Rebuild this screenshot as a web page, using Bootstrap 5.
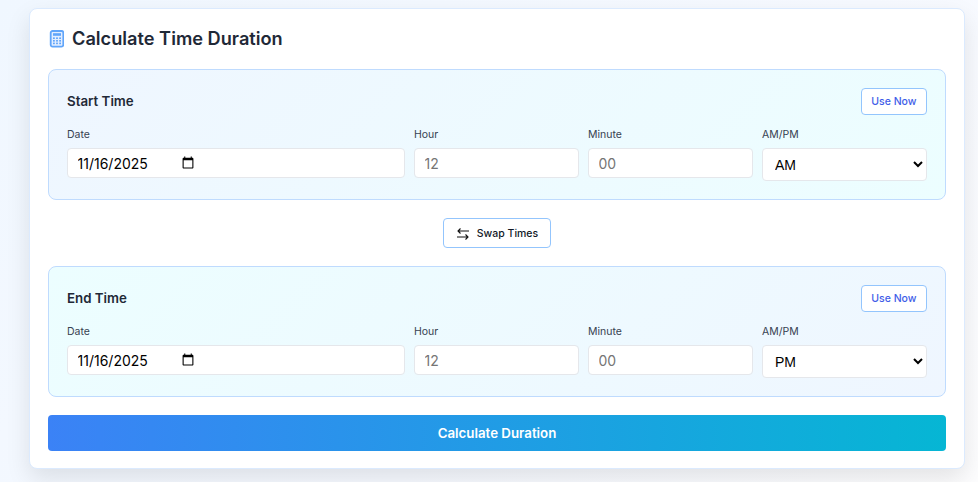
<!DOCTYPE html>
<html lang="en">
<head>
<meta charset="utf-8">
<title>Calculate Time Duration</title>
<link href="https://cdn.jsdelivr.net/npm/bootstrap@5.3.0/dist/css/bootstrap.min.css" rel="stylesheet">
<style>
html,body{height:482px;overflow:hidden}
body{font-family:Inter,sans-serif;background:linear-gradient(135deg,#f0f7ff 0%,#f6f9ff 60%,#fdfdfe 100%);color:#1f2937}
.page-wrap{padding:8px 13px 0 29px}
.calc-card{background:#fff;border:1px solid #dbeafe;border-radius:8px;box-shadow:0 10px 25px rgba(0,0,0,.1);padding:17px 18px;height:461px}
.calc-title{font-size:18.2px;font-weight:600;line-height:25px;margin:0 0 18px;height:25px;padding-bottom:0;color:#1f2937}
.time-panel{border:1px solid #bfdbfe;border-radius:8px;padding:18px;height:131px}
.panel-a{background:linear-gradient(135deg,#eff6ff,#ecfeff)}
.panel-b{background:linear-gradient(135deg,#ecfeff,#eff6ff)}
.panel-name{font-size:13.3px;font-weight:600;margin:0;color:#1f2937}
.panel-head{height:27px;margin-bottom:13px}
.use-btn{font-size:10.5px;font-weight:500;color:#3f5ee8;background:#fff;border:1px solid #93c5fd;border-radius:4px;padding:0 9.5px;height:27px;line-height:25px}
.use-btn:hover{background:#fff;color:#3f5ee8;border-color:#93c5fd}
.field-grid{display:grid;grid-template-columns:minmax(0,1fr) repeat(3,165px);gap:9px}
.field-label{font-size:10.5px;font-weight:400;color:#374151;line-height:13px;margin:0 0 7px;display:block}
.field-input{font-size:14px;height:30px;border:1px solid #e5e7eb;border-radius:4px;padding:0 9.5px;color:#000;box-shadow:none}
.field-input::placeholder{color:#757575}
.date-box{height:30px;border:1px solid #e5e7eb;border-radius:4px;background:#fff;padding:0 9.5px}
.date-input{font-family:Inter,sans-serif;font-size:14px;color:#000;border:0;outline:0;background:transparent;padding:0;height:28px;width:119px;display:block}
.field-select{font-size:14px;height:33px;border:1px solid #e5e7eb;border-radius:4px;padding:0 9.5px 0 8px;color:#000;font-family:"Liberation Sans",Arial,sans-serif;box-shadow:none;background-image:none;appearance:auto;background-color:#fff}
.swap-row{padding:18px 0}
.swap-btn{font-size:10.5px;font-weight:500;color:#111827;background:#fff;border:1px solid #93c5fd;border-radius:4px;height:30px;padding:1px 12px 0;gap:7px}
.swap-btn:hover{background:#fff;color:#111827;border-color:#93c5fd}
.calc-btn{display:block;width:100%;height:36px;margin-top:18px;border:0;border-radius:4px;color:#fff;font-size:13.3px;font-weight:600;padding-top:2px;background:linear-gradient(90deg,#3b82f6,#06b6d4)}
</style>
</head>
<body>
<div class="page-wrap">
  <div class="calc-card">
    <h1 class="calc-title d-flex align-items-center gap-2 mt-0">
      <svg width="16" height="18" viewBox="-1 0 16 18" aria-hidden="true">
        <rect x="1.7" y="1" width="12.6" height="15.6" rx="1.8" fill="#e3eeff" stroke="#60a5fa" stroke-width="1.8"/>
        <rect x="4" y="3.2" width="8" height="2.6" fill="#60a5fa"/>
        <g fill="#60a5fa"><rect x="4" y="7.4" width="1.8" height="1.6"/><rect x="7.1" y="7.4" width="1.8" height="1.6"/><rect x="10.2" y="7.4" width="1.8" height="1.6"/><rect x="4" y="10" width="1.8" height="1.6"/><rect x="7.1" y="10" width="1.8" height="1.6"/><rect x="10.2" y="10" width="1.8" height="1.6"/><rect x="4" y="12.6" width="1.8" height="1.6"/><rect x="7.1" y="12.6" width="1.8" height="1.6"/><rect x="10.2" y="12.6" width="1.8" height="1.6"/></g>
      </svg>
      Calculate Time Duration
    </h1>

    <section class="time-panel panel-a">
      <div class="panel-head d-flex justify-content-between align-items-center">
        <h2 class="panel-name">Start Time</h2>
        <button type="button" class="btn use-btn">Use Now</button>
      </div>
      <div class="field-grid">
        <div><label class="field-label">Date</label><div class="date-box"><input type="date" class="date-input" value="2025-11-16"></div></div>
        <div><label class="field-label">Hour</label><input type="text" class="form-control field-input" placeholder="12"></div>
        <div><label class="field-label">Minute</label><input type="text" class="form-control field-input" placeholder="00"></div>
        <div><label class="field-label">AM/PM</label><select class="form-select field-select"><option selected>AM</option><option>PM</option></select></div>
      </div>
    </section>

    <div class="swap-row d-flex justify-content-center">
      <button type="button" class="btn swap-btn d-inline-flex align-items-center">
        <svg width="14" height="14" viewBox="0 0 14 14" fill="none" stroke="#111" stroke-width="1.1" aria-hidden="true"><path d="M13 4H2M4.5 1.5 2 4l2.5 2.5M1 10h11M9.5 7.5 12 10l-2.5 2.5"/></svg>
        Swap Times
      </button>
    </div>

    <section class="time-panel panel-b">
      <div class="panel-head d-flex justify-content-between align-items-center">
        <h2 class="panel-name">End Time</h2>
        <button type="button" class="btn use-btn">Use Now</button>
      </div>
      <div class="field-grid">
        <div><label class="field-label">Date</label><div class="date-box"><input type="date" class="date-input" value="2025-11-16"></div></div>
        <div><label class="field-label">Hour</label><input type="text" class="form-control field-input" placeholder="12"></div>
        <div><label class="field-label">Minute</label><input type="text" class="form-control field-input" placeholder="00"></div>
        <div><label class="field-label">AM/PM</label><select class="form-select field-select"><option>AM</option><option selected>PM</option></select></div>
      </div>
    </section>

    <button type="button" class="calc-btn">Calculate Duration</button>
  </div>
</div>
<script src="https://cdn.jsdelivr.net/npm/bootstrap@5.3.0/dist/js/bootstrap.bundle.min.js"></script>
</body>
</html>
